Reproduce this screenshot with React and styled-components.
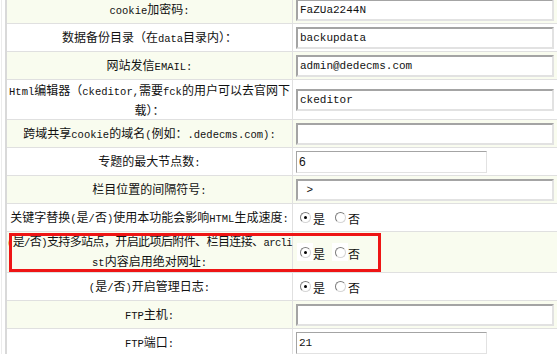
import React from 'react';
import styled, { createGlobalStyle } from 'styled-components';

const Global = createGlobalStyle`
  html, body { margin: 0; padding: 0; background: #fff; overflow: hidden; }
  body {
    font-family: "Noto Sans CJK SC", "Liberation Sans", sans-serif;
    font-size: 12px;
    color: #111;
  }
`;

const Frame = styled.div`
  margin: -4px 0 0 1px;
  padding-left: 3px;
  border-left: 1px solid #ececec;
`;

const Table = styled.div`
  display: flex;
  flex-direction: column;
  gap: 1px;
  background: #e0e0e0;
  border-left: 2px solid #d9d9d9;
`;

const Row = styled.div`
  position: relative;
  display: grid;
  grid-template-columns: 285px 1fr;
  column-gap: 1px;
  min-height: ${(p) => (p.$tall ? 39 : 27)}px;
`;

const LabelCell = styled.div`
  background: ${(p) => (p.$alt ? '#f9fcef' : '#fff')};
  display: flex;
  flex-direction: column;
  justify-content: center;
  align-items: center;
`;

const Line = styled.span`
  display: block;
  white-space: nowrap;
  line-height: 17px;
  letter-spacing: ${(p) => (p.$tight ? '-0.6px' : '0')};
`;

const Lat = styled.span`
  font-family: "Liberation Mono", monospace;
  font-size: 10.5px;
`;

const ValueCell = styled.div`
  background: ${(p) => (p.$alt ? '#f9fcef' : '#fff')};
  display: flex;
  align-items: center;
  padding-left: 3px;
`;

const TextInput = styled.input`
  box-sizing: border-box;
  width: ${(p) => (p.$short ? 191 : 258)}px;
  height: 22px;
  margin: 0;
  padding: 0 2px;
  border-style: solid;
  border-width: ${(p) => (p.$short ? 1 : 2)}px;
  border-color: #a4a4a4 #e2e2e2 #e2e2e2 #a4a4a4;
  background: #fff;
  font-family: ${(p) => (p.$sans ? '"Liberation Sans", sans-serif' : '"Liberation Mono", monospace')};
  font-size: ${(p) => (p.$sans ? 12 : 11)}px;
  color: #111;
  outline: none;
`;

const RadioGroup = styled.div`
  display: flex;
  align-items: center;
  padding-left: 1px;
`;

const RadioBox = styled.span`
  display: inline-flex;
  align-items: center;
  justify-content: center;
  width: 16px;
  height: 18px;
  background: #fff;
`;

const RadioDot = styled.span`
  box-sizing: border-box;
  width: 11px;
  height: 11px;
  border-radius: 50%;
  border: 1px solid;
  border-color: #7c7c7c #d6d6d6 #d6d6d6 #7c7c7c;
  background: #fff;
  display: flex;
  align-items: center;
  justify-content: center;
  &::after {
    content: '';
    width: 3px;
    height: 3px;
    border-radius: 50%;
    background: #000;
    display: ${(p) => (p.$checked ? 'block' : 'none')};
  }
`;

const RadioText = styled.span`
  font-size: 12px;
  line-height: 14px;
  margin-right: 7px;
  padding-top: 3px;
`;

const Mark = styled.div`
  position: absolute;
  left: 2px;
  top: 1px;
  width: 372px;
  height: 39px;
  box-sizing: border-box;
  border: 3px solid #ee1515;
  pointer-events: none;
`;

const rows = [
  { label: ['cookie加密码:'], value: 'FaZUa2244N' },
  { label: ['数据备份目录（在data目录内）：'], value: 'backupdata' },
  { label: ['网站发信EMAIL:'], value: 'admin@dedecms.com' },
  { label: ['Html编辑器（ckeditor,需要fck的用户可以去官网下', '载）：'], value: 'ckeditor' },
  { label: ['跨域共享cookie的域名(例如：.dedecms.com):'], value: '' },
  { label: ['专题的最大节点数:'], value: '6', short: true, sans: true },
  { label: ['栏目位置的间隔符号:'], value: ' > ' },
  { label: ['关键字替换(是/否)使用本功能会影响HTML生成速度:'], radio: true },
  {
    label: ['(是/否)支持多站点，开启此项后附件、栏目连接、arcli', 'st内容启用绝对网址:'],
    tight: 0,
    radio: true,
    marked: true,
  },
  { label: ['(是/否)开启管理日志:'], radio: true },
  { label: ['FTP主机:'], value: '' },
  { label: ['FTP端口:'], value: '21', short: true },
];

function Mixed({ text }) {
  const parts = text.split(/([\x20-\x7E]+)/).filter(Boolean);
  return parts.map((p, i) =>
    /^[\x20-\x7E]+$/.test(p) ? <Lat key={i}>{p}</Lat> : <React.Fragment key={i}>{p}</React.Fragment>
  );
}

function Radios() {
  return (
    <RadioGroup>
      <RadioBox role="radio" aria-checked="true">
        <RadioDot $checked />
      </RadioBox>
      <RadioText>是</RadioText>
      <RadioBox role="radio" aria-checked="false">
        <RadioDot />
      </RadioBox>
      <RadioText>否</RadioText>
    </RadioGroup>
  );
}

export default function App() {
  return (
    <>
      <Global />
      <Frame>
        <Table>
          {rows.map((r, i) => {
            const alt = i % 2 === 0;
            return (
              <Row key={i} $tall={r.label.length > 1}>
                <LabelCell $alt={alt}>
                  {r.label.map((l, j) => (
                    <Line key={j} $tight={r.tight === j}>
                      <Mixed text={l} />
                    </Line>
                  ))}
                </LabelCell>
                <ValueCell $alt={alt}>
                  {r.radio ? (
                    <Radios />
                  ) : (
                    <TextInput
                      type="text"
                      defaultValue={r.value}
                      $short={r.short}
                      $sans={r.sans}
                      readOnly
                    />
                  )}
                </ValueCell>
                {r.marked && <Mark />}
              </Row>
            );
          })}
        </Table>
      </Frame>
    </>
  );
}
